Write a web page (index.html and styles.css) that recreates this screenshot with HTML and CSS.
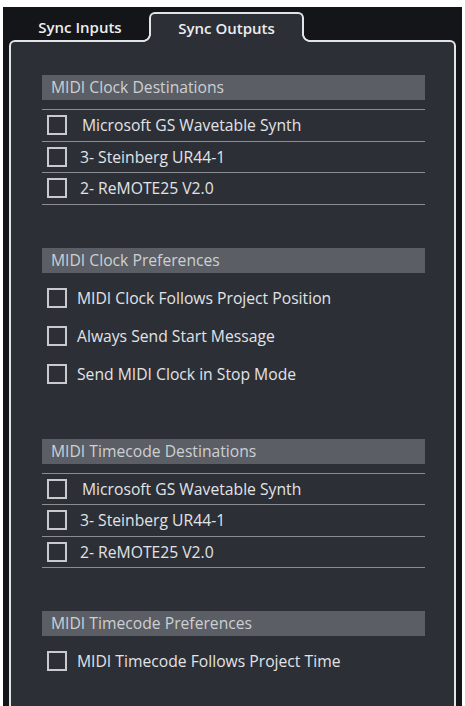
FILE: index.html
```html
<!DOCTYPE html>
<html>
<head>
<meta charset="utf-8">
<link rel="stylesheet" href="styles.css">
</head>
<body>
<div class="frame">
  <div class="tabs">
    <div class="tab">Sync Inputs</div>
    <div class="tab active">Sync Outputs</div>
  </div>
  <div class="panel">
    <section class="group">
      <div class="group-head">MIDI Clock Destinations</div>
      <ul class="dest-list">
        <li class="dest-row"><span class="check"></span><span class="label first">Microsoft GS Wavetable Synth</span></li>
        <li class="dest-row"><span class="check"></span><span class="label">3- Steinberg UR44-1</span></li>
        <li class="dest-row"><span class="check"></span><span class="label">2- ReMOTE25 V2.0</span></li>
      </ul>
    </section>
    <section class="group">
      <div class="group-head">MIDI Clock Preferences</div>
      <ul class="pref-list">
        <li class="pref-row"><span class="check"></span><span class="label">MIDI Clock Follows Project Position</span></li>
        <li class="pref-row"><span class="check"></span><span class="label">Always Send Start Message</span></li>
        <li class="pref-row"><span class="check"></span><span class="label">Send MIDI Clock in Stop Mode</span></li>
      </ul>
    </section>
    <section class="group">
      <div class="group-head">MIDI Timecode Destinations</div>
      <ul class="dest-list">
        <li class="dest-row"><span class="check"></span><span class="label first">Microsoft GS Wavetable Synth</span></li>
        <li class="dest-row"><span class="check"></span><span class="label">3- Steinberg UR44-1</span></li>
        <li class="dest-row"><span class="check"></span><span class="label">2- ReMOTE25 V2.0</span></li>
      </ul>
    </section>
    <section class="group">
      <div class="group-head">MIDI Timecode Preferences</div>
      <ul class="pref-list">
        <li class="pref-row"><span class="check"></span><span class="label">MIDI Timecode Follows Project Time</span></li>
      </ul>
    </section>
  </div>
</div>
</body>
</html>
```
FILE: styles.css
```css
* { box-sizing: border-box; }
html, body { margin: 0; padding: 0; background: #ffffff; }
body {
  font-family: "Open Sans", "Noto Sans", sans-serif;
  height: 706px;
  overflow: hidden;
}
.frame {
  margin: 7px 3px 0 3px;
  height: 720px;
  background: #131519;
  padding: 5px 6px 0 6px;
}
.tabs {
  display: flex;
  height: 28px;
}
.tab {
  height: 30px;
  display: flex;
  align-items: center;
  justify-content: center;
  font-size: 15px;
  font-weight: 600;
  color: #eceef0;
  flex: none;
}
.tab:first-child {
  margin-left: 2px;
  width: 138px;
}
.tab.active {
  width: 155px;
  border: 2px solid #e2e5e8;
  border-bottom: 0;
  border-radius: 6px 6px 0 0;
  background: #2c2f36;
  position: relative;
  z-index: 1;
}
.tab.active::before,
.tab.active::after {
  content: "";
  position: absolute;
  bottom: 0;
  width: 8px;
  height: 8px;
}
.tab.active::before {
  left: -8px;
  background: radial-gradient(circle at 0 0, #131519 5.6px, #e2e5e8 6.2px, #e2e5e8 7.6px, #2c2f36 8.2px);
}
.tab.active::after {
  right: -8px;
  background: radial-gradient(circle at 100% 0, #131519 5.6px, #e2e5e8 6.2px, #e2e5e8 7.6px, #2c2f36 8.2px);
}
.panel {
  border: 2px solid #e2e5e8;
  border-bottom: 0;
  border-radius: 6px 6px 0 0;
  background: #2c2f36;
  height: 700px;
  padding: 33px 29px 0 31px;
}
.group + .group { margin-top: 43px; }
.group-head {
  height: 25px;
  line-height: 25px;
  background: #5b5e65;
  color: #cdd0d3;
  padding-left: 9px;
  font-size: 15.7px;
}
.dest-list, .pref-list {
  list-style: none;
  margin: 0;
  padding: 0;
}
.dest-list {
  margin-top: 9px;
  border-top: 1px solid #8a8d92;
}
.dest-row {
  height: 31.5px;
  border-bottom: 1px solid #8a8d92;
  display: flex;
  align-items: center;
  gap: 13px;
  padding-left: 5px;
}
.pref-list { padding: 6px 0 3px; }
.pref-row {
  height: 38px;
  display: flex;
  align-items: center;
  gap: 10px;
  padding-left: 5px;
}
.check {
  flex: none;
  width: 20px;
  height: 20px;
  border: 2px solid #c8cacd;
}
.label {
  font-size: 15.7px;
  color: #e1e3e6;
  white-space: nowrap;
}
.label.first { margin-left: 2px; }
```
